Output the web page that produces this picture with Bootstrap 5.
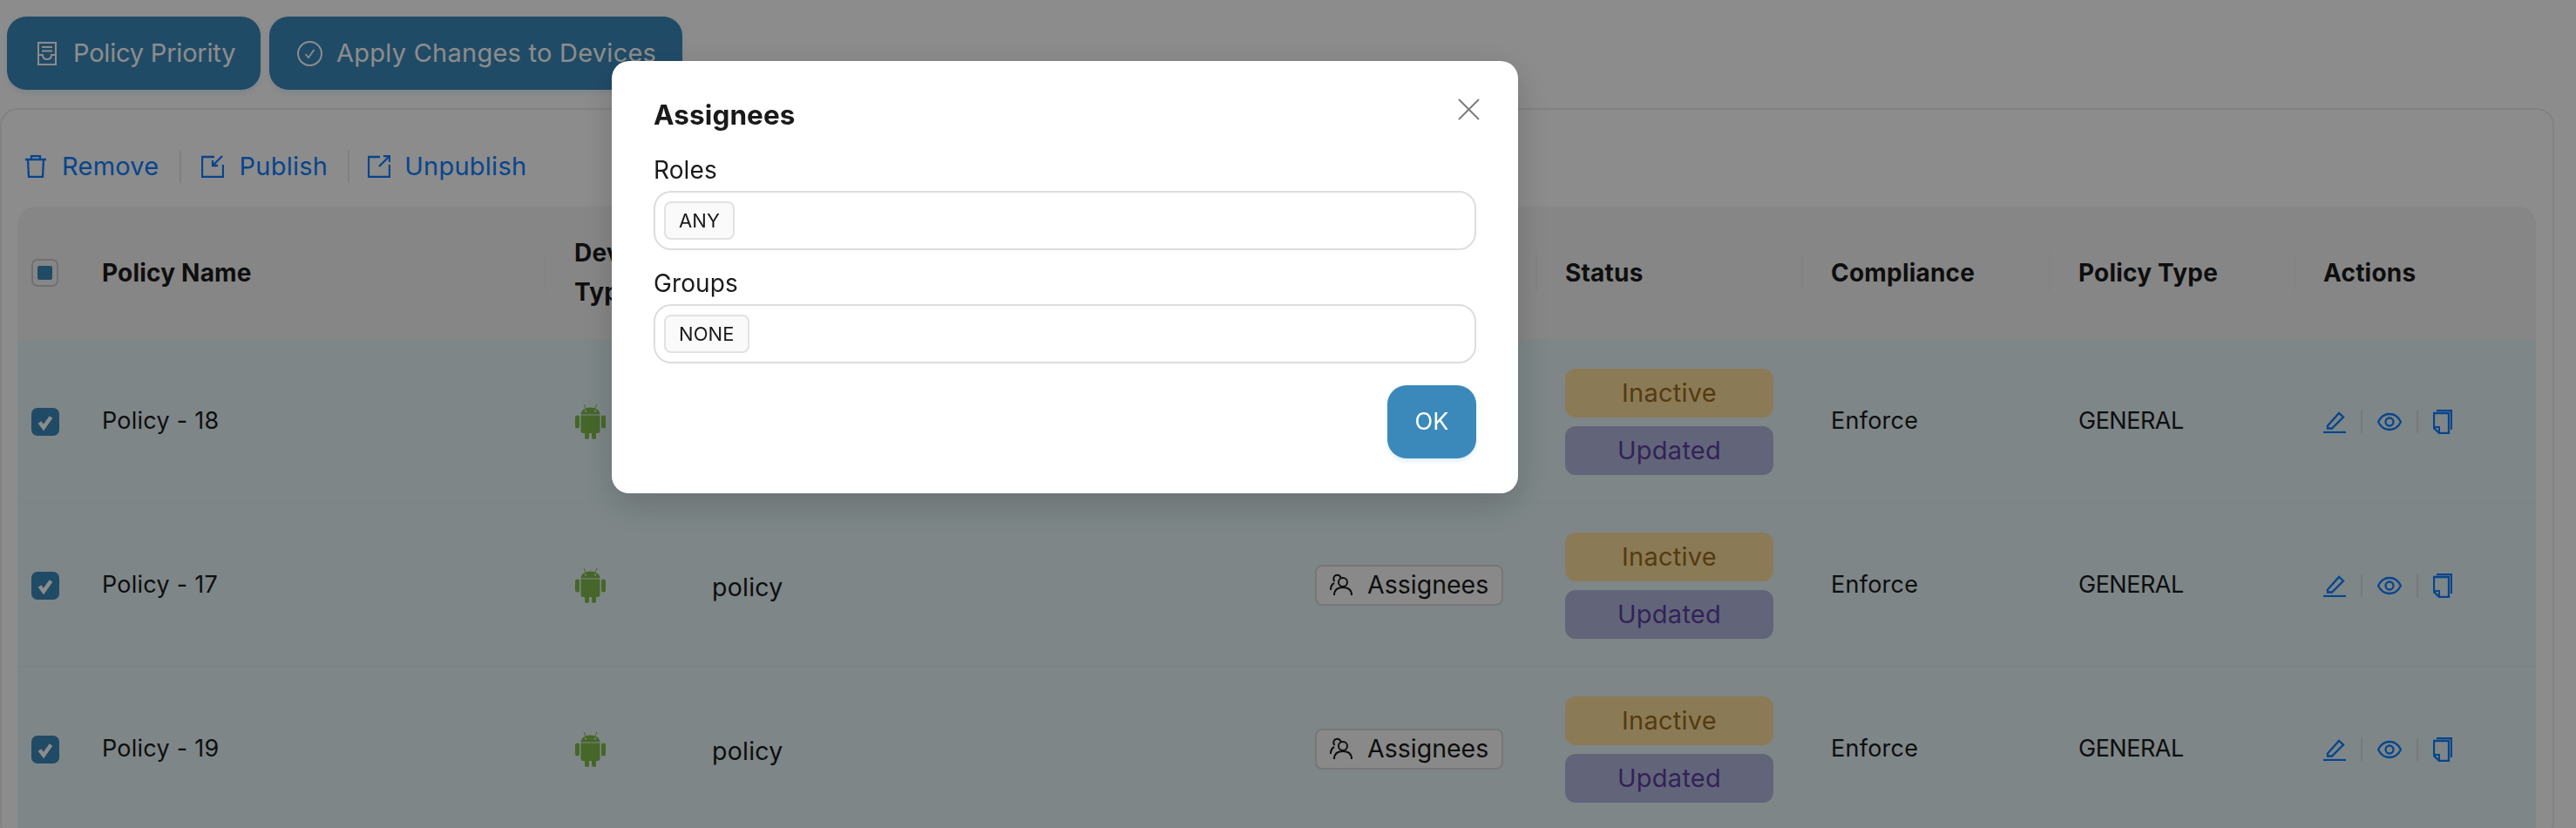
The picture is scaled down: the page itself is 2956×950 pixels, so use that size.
<!DOCTYPE html>
<html lang="en">
<head>
<meta charset="utf-8">
<title>Policies</title>
<link href="https://cdn.jsdelivr.net/npm/bootstrap@5.3.0/dist/css/bootstrap.min.css" rel="stylesheet">
<style>
html,body{height:950px;overflow:hidden}
body{font-family:"Inter","Noto Sans",sans-serif;font-size:27px;color:#1a1a1a;background:#fff;letter-spacing:.25px}
.top-actions{padding:19px 0 0 8px;gap:10px}
.main-btn{height:84px;border-radius:22px;background:#3b89bb;color:#fff;border:0;font-size:29px;display:flex;align-items:center;box-shadow:0 4px 6px rgba(59,137,187,.12);white-space:nowrap;justify-content:flex-start}
.btn-priority{width:291px;padding-left:35px;gap:19px;letter-spacing:-.2px}
.btn-apply{width:474px;padding-left:32px;gap:16px;letter-spacing:.25px}
.policy-panel{margin-top:21px;width:2931px;border:2px solid #ededed;border-radius:20px;padding:0 18px;height:840px}
.tool-row{height:111px;padding:18px 0 0 9px;gap:23px;font-size:29px}
.tool-link{color:#0f7fff;text-decoration:none;display:flex;align-items:center;gap:18px}
.tool-row .tool-last{gap:16px;margin-left:-2px}
.tool-sep{width:2px;height:38px;background:#eaeaea}
.policy-table{table-layout:fixed;width:2890px;margin:0;border-collapse:separate;border-spacing:0}
.policy-table>:not(caption)>*>*{padding:0 0 0 34px;box-shadow:none;vertical-align:middle;border:0;color:#1a1a1a}
.policy-table thead th{height:152px;background:#f5f5f5;font-weight:700;line-height:45px;position:relative;font-size:28px;letter-spacing:.2px}
.policy-table thead th:first-child{border-top-left-radius:20px}
.policy-table thead th:last-child{border-top-right-radius:20px}
.policy-table thead th.has-sep::before{content:"";position:absolute;left:0;top:53px;width:2px;height:45px;background:#eee}
.policy-table tbody td{height:188px;background:#e5f5f7;border-bottom:1px solid #dfeef0;font-weight:400;padding-top:2px}
.policy-table .check-cell{padding-left:16px}
.tick-box{width:32px;height:32px;border-radius:7px;background:#3b89bb;display:flex;align-items:center;justify-content:center}
.tick-some{background:#f5f5f5;border:2px solid #ccc;width:31px}
.tick-some span{display:block;width:17px;height:16px;background:#3b89bb;border-radius:2px}
.policy-table tbody td.desc-cell{padding-top:8px;font-size:28.5px}
.droid-mark{display:block;margin-left:1px}
.assign-btn{display:inline-flex;align-items:center;gap:17px;width:216px;height:47px;border:2px solid #d9d9d9;border-radius:8px;background:#fafafa;padding:0 0 0 15px;font-size:28.5px;color:#1a1a1a;line-height:1;white-space:nowrap}
.state-stack{width:239px;gap:10px}
.state-pill{height:56px;border-radius:12px;display:flex;align-items:center;justify-content:center;font-weight:400;font-size:29px}
.state-off{background:#fddf9d;color:#9a6c20}
.state-new{background:#b3b8dc;color:#5c3fa0}
.caps-tight{letter-spacing:-.5px}
.act-row{gap:17px}
.act-sep{width:2px;height:26px;background:#ddd}
.assign-dialog{max-width:1040px;width:1040px;margin:70px 0 0 702px}
.assign-content{border:0;border-radius:20px;padding:40px 48px;height:496px;box-shadow:0 12px 40px rgba(0,0,0,.18);letter-spacing:.1px}
.assign-title{font-size:31.5px;font-weight:700;line-height:44px;margin:0;color:#1a1a1a}
.x-btn{background:none;border:0;padding:0;line-height:0;margin:-13px -4px 0 0;height:25px}
.field-name{line-height:40px;font-size:28px}
.field-top{margin-top:21px}
.field-next{margin-top:18px}
.tag-field{height:68px;border:2px solid #ddd;border-radius:20px;margin-top:4px;padding-left:10px;width:944px}
.tag-chip{height:44px;border:2px solid #e2e2e2;border-radius:8px;background:#fafafa;font-size:22px;padding:0 15px;display:flex;align-items:center;color:#1a1a1a}
.ok-btn{width:102px;height:84px;margin:25px 0 0 842px;border:0;border-radius:22px;background:#3b89bb;color:#fff;font-size:27px;box-shadow:0 4px 4px rgba(59,137,187,.12)}
.modal-backdrop.show{opacity:.45}
</style>
</head>
<body>
<svg width="0" height="0" class="d-none">
  <symbol id="droid" viewBox="0 0 35 40">
    <path d="M10 0l2 4.500M25 0l-2 4.500" stroke="#80bb4d" stroke-width="1" fill="none"/>
    <path d="M6.500 11.500c0-5 5-8 11-8s11 3 11 8z" fill="#80bb4d"/>
    <path d="M6.500 12.500h22v18c0 1.500-1 2.500-2.500 2.500h-2v4.500a2.500 2.500 0 0 1-5 0V33h-3v4.500a2.500 2.500 0 0 1-5 0V33H9c-1.500 0-2.500-1-2.500-2.500z" fill="#80bb4d"/>
    <rect x="0" y="12.500" width="5" height="15" rx="2.500" fill="#80bb4d"/>
    <rect x="30" y="12.500" width="5" height="15" rx="2.500" fill="#80bb4d"/>
    <circle cx="12" cy="7.500" r="1.100" fill="#e5f5f7"/><circle cx="23" cy="7.500" r="1.100" fill="#e5f5f7"/>
  </symbol>
  <symbol id="pen" viewBox="0 0 26 26">
    <path d="M5 17.500L18 3l5 4.500L10 20.500H5z" fill="none" stroke="currentColor" stroke-width="2.300"/>
    <path d="M0 25h26" stroke="currentColor" stroke-width="2.300"/>
  </symbol>
  <symbol id="eye" viewBox="0 0 28 22">
    <path d="M1 11C4 5 9 2 14 2s10 3 13 9c-3 6-8 9-13 9S4 17 1 11z" fill="none" stroke="currentColor" stroke-width="2.300"/>
    <circle cx="14" cy="11" r="4.500" fill="none" stroke="currentColor" stroke-width="2.300"/>
  </symbol>
  <symbol id="dupe" viewBox="0 0 22 28">
    <path d="M4 1h17v22" fill="none" stroke="currentColor" stroke-width="2.300"/>
    <path d="M1 4h17v23H7L1 21z" fill="none" stroke="currentColor" stroke-width="2.300"/>
    <path d="M1 20h6v7" fill="none" stroke="currentColor" stroke-width="2"/>
  </symbol>
  <symbol id="people" viewBox="0 0 26 26">
    <circle cx="15" cy="10" r="5" fill="none" stroke="currentColor" stroke-width="2"/>
    <path d="M5 25c0-6 4-9 10-9s10 3 10 9" fill="none" stroke="currentColor" stroke-width="2"/>
    <path d="M13 5c-1-2-3-4-6-3-3 1-3.500 5-1.500 7 M5 11c-2 1-4 4-4 8" fill="none" stroke="currentColor" stroke-width="2"/>
  </symbol>
  <symbol id="tick" viewBox="0 0 20 20">
    <path d="M3.500 10.500l4.500 6 8.500-12" fill="none" stroke="#fff" stroke-width="4.500"/>
  </symbol>
</svg>

<div class="d-flex top-actions">
  <button class="main-btn btn-priority" type="button">
    <svg width="22" height="27" viewBox="0 0 22 27" fill="none" stroke="#fff" stroke-width="2"><path d="M1 1h20v25H1z"/><path d="M5 6h12M5 10.500h12"/><path d="M1 15h5c0 3 2 5 5 5s5-2 5-5h5"/></svg>
    Policy Priority
  </button>
  <button class="main-btn btn-apply" type="button">
    <svg width="29" height="29" viewBox="0 0 29 29" fill="none" stroke="#fff" stroke-width="2"><circle cx="14.500" cy="14.500" r="13.500"/><path d="M9.500 15l3.500 4 6.500-9" stroke-width="1.800"/></svg>
    Apply Changes to Devices
  </button>
</div>

<div class="policy-panel">
  <div class="d-flex align-items-center tool-row">
    <a class="tool-link" href="#">
      <svg width="24" height="26" viewBox="0 0 24 26" fill="none" stroke="currentColor" stroke-width="2.300"><path d="M0 5h24M7 5V1h10v4M3 5l1 20h16l1-20"/></svg>
      Remove
    </a>
    <span class="tool-sep"></span>
    <a class="tool-link" href="#">
      <svg width="26" height="26" viewBox="0 0 26 26" fill="none" stroke="currentColor" stroke-width="2.300"><path d="M15 2H1v23h24V11"/><path d="M24 1L14 11M13 6v6h6"/></svg>
      Publish
    </a>
    <span class="tool-sep"></span>
    <a class="tool-link tool-last" href="#">
      <svg width="26" height="26" viewBox="0 0 26 26" fill="none" stroke="currentColor" stroke-width="2.300"><path d="M14 2H1v23h24V11"/><path d="M13 13L24 2M18 1h7v7"/></svg>
      Unpublish
    </a>
  </div>

  <table class="table policy-table">
    <colgroup>
      <col style="width:63px"><col style="width:542px"><col style="width:158px"><col style="width:692px"><col style="width:287px"><col style="width:305px"><col style="width:284px"><col style="width:281px"><col style="width:278px">
    </colgroup>
    <thead>
      <tr>
        <th class="check-cell"><div class="tick-box tick-some"><span></span></div></th>
        <th>Policy Name</th>
        <th class="has-sep">Device Type</th>
        <th class="has-sep"></th>
        <th class="has-sep"></th>
        <th class="has-sep">Status</th>
        <th class="has-sep">Compliance</th>
        <th class="has-sep">Policy Type</th>
        <th class="has-sep">Actions</th>
      </tr>
    </thead>
    <tbody>
      <tr>
        <td class="check-cell"><div class="tick-box"><svg width="20" height="20"><use href="#tick"/></svg></div></td>
        <td>Policy - 18</td>
        <td><svg class="droid-mark" width="35" height="40"><use href="#droid"/></svg></td>
        <td class="desc-cell"></td>
        <td></td>
        <td><div class="d-flex flex-column state-stack"><span class="state-pill state-off">Inactive</span><span class="state-pill state-new">Updated</span></div></td>
        <td>Enforce</td>
        <td class="caps-tight">GENERAL</td>
        <td><div class="d-flex align-items-center act-row"><svg class="tool-link" width="26" height="26"><use href="#pen"/></svg><span class="act-sep"></span><svg class="tool-link" width="28" height="22"><use href="#eye"/></svg><span class="act-sep"></span><svg class="tool-link" width="22" height="28"><use href="#dupe"/></svg></div></td>
      </tr>
      <tr>
        <td class="check-cell"><div class="tick-box"><svg width="20" height="20"><use href="#tick"/></svg></div></td>
        <td>Policy - 17</td>
        <td><svg class="droid-mark" width="35" height="40"><use href="#droid"/></svg></td>
        <td class="desc-cell">policy</td>
        <td><button class="assign-btn" type="button"><svg width="26" height="26"><use href="#people"/></svg>Assignees</button></td>
        <td><div class="d-flex flex-column state-stack"><span class="state-pill state-off">Inactive</span><span class="state-pill state-new">Updated</span></div></td>
        <td>Enforce</td>
        <td class="caps-tight">GENERAL</td>
        <td><div class="d-flex align-items-center act-row"><svg class="tool-link" width="26" height="26"><use href="#pen"/></svg><span class="act-sep"></span><svg class="tool-link" width="28" height="22"><use href="#eye"/></svg><span class="act-sep"></span><svg class="tool-link" width="22" height="28"><use href="#dupe"/></svg></div></td>
      </tr>
      <tr>
        <td class="check-cell"><div class="tick-box"><svg width="20" height="20"><use href="#tick"/></svg></div></td>
        <td>Policy - 19</td>
        <td><svg class="droid-mark" width="35" height="40"><use href="#droid"/></svg></td>
        <td class="desc-cell">policy</td>
        <td><button class="assign-btn" type="button"><svg width="26" height="26"><use href="#people"/></svg>Assignees</button></td>
        <td><div class="d-flex flex-column state-stack"><span class="state-pill state-off">Inactive</span><span class="state-pill state-new">Updated</span></div></td>
        <td>Enforce</td>
        <td class="caps-tight">GENERAL</td>
        <td><div class="d-flex align-items-center act-row"><svg class="tool-link" width="26" height="26"><use href="#pen"/></svg><span class="act-sep"></span><svg class="tool-link" width="28" height="22"><use href="#eye"/></svg><span class="act-sep"></span><svg class="tool-link" width="22" height="28"><use href="#dupe"/></svg></div></td>
      </tr>
    </tbody>
  </table>
</div>

<div class="modal-backdrop show"></div>
<div class="modal show d-block" tabindex="-1" role="dialog">
  <div class="modal-dialog assign-dialog">
    <div class="modal-content assign-content">
      <div class="d-flex justify-content-between align-items-center">
        <h5 class="assign-title">Assignees</h5>
        <button class="x-btn" type="button" aria-label="Close"><svg width="25" height="25" viewBox="0 0 25 25" fill="none" stroke="#7d7d7d" stroke-width="2"><path d="M1 1l23 23M24 1L1 24"/></svg></button>
      </div>
      <div class="field-name field-top">Roles</div>
      <div class="d-flex align-items-center tag-field"><span class="tag-chip">ANY</span></div>
      <div class="field-name field-next">Groups</div>
      <div class="d-flex align-items-center tag-field"><span class="tag-chip">NONE</span></div>
      <button class="ok-btn" type="button">OK</button>
    </div>
  </div>
</div>
<script src="https://cdn.jsdelivr.net/npm/bootstrap@5.3.0/dist/js/bootstrap.bundle.min.js"></script>
</body>
</html>
